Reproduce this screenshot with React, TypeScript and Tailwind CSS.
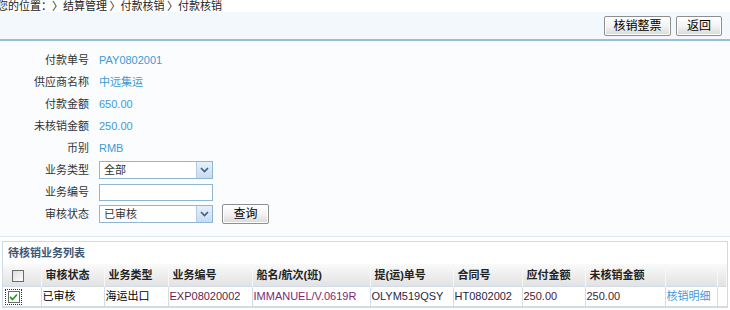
import React from "react";

const FONT = "font-['Liberation_Sans','Noto_Sans_CJK_SC',sans-serif]";

const Chevron = () => (
  <svg width="9" height="6" viewBox="0 0 9 6">
    <path d="M1 1 L4.5 4.5 L8 1" stroke="#3b5f88" strokeWidth="1.6" fill="none" />
  </svg>
);

const Select = ({ value }: { value: string }) => (
  <div className="w-[114px] h-[18px] border border-[#90b6d4] bg-white flex items-center">
    <span className="flex-1 pl-[4px] text-[11px] text-[#333] leading-none">{value}</span>
    <span className="w-[16px] h-[16px] bg-gradient-to-b from-[#e6f0fa] to-[#c6dcf0] border-l border-[#b5cde3] flex items-center justify-center">
      <Chevron />
    </span>
  </div>
);

const Btn = ({ label, w }: { label: string; w: string }) => (
  <button
    className={`${w} h-[20px] border border-[#8e8e8e] rounded-[2px] bg-gradient-to-b from-white via-[#f3f3f3] to-[#d9d9d9] text-[12px] text-black leading-none shadow-[inset_0_0_0_1px_#ffffff]`}
  >
    {label}
  </button>
);

const info = [
  ["付款单号", "PAY0802001"],
  ["供应商名称", "中远集运"],
  ["付款金额", "650.00"],
  ["未核销金额", "250.00"],
  ["币别", "RMB"],
];

const cols = [
  { w: "w-[38px]", h: "" },
  { w: "w-[63px]", h: "审核状态" },
  { w: "w-[64px]", h: "业务类型" },
  { w: "w-[84px]", h: "业务编号" },
  { w: "w-[118px]", h: "船名/航次(班)" },
  { w: "w-[83px]", h: "提(运)单号" },
  { w: "w-[69px]", h: "合同号" },
  { w: "w-[63px]", h: "应付金额" },
  { w: "w-[80px]", h: "未核销金额" },
  { w: "w-[52px]", h: "" },
  { w: "", h: "" },
];

const row = [
  { t: "已审核", c: "text-black" },
  { t: "海运出口", c: "text-black" },
  { t: "EXP08020002", c: "text-[#5c1f4c]" },
  { t: "IMMANUEL/V.0619R", c: "text-[#7d2876]" },
  { t: "OLYM519QSY", c: "text-[#1f2a48]" },
  { t: "HT0802002", c: "text-[#2a2440]" },
  { t: "250.00", c: "text-[#4a1c30]" },
  { t: "250.00", c: "text-[#4a1c30]" },
];

export default function App() {
  return (
    <div className={`w-[730px] h-[310px] bg-white overflow-hidden text-[11px] ${FONT}`}>
      <div className="h-[12px] overflow-hidden">
        <div className="-mt-[1px] -ml-[3px] leading-[12px] text-[#222] whitespace-nowrap font-['Noto_Sans_CJK_SC',sans-serif] [text-spacing-trim:space-all]">
          您的位置：〉结算管理 〉付款核销 〉付款核销
        </div>
      </div>

      <div className="h-[29px] bg-[#f2f8fc] border-b-2 border-[#98bfd8] flex items-center justify-end gap-[5px] pr-[8px]">
        <Btn label="核销整票" w="w-[67px]" />
        <Btn label="返回" w="w-[46px]" />
      </div>

      <div className="bg-[#fafcfe] pt-[8px] pb-[11px] border-b border-[#d8e9f4]">
        {info.map(([k, v]) => (
          <div key={k} className="h-[22px] flex items-center">
            <span className="w-[89px] text-right text-[#333]">{k}</span>
            <span className="ml-[10px] text-[#3d9ad8]">{v}</span>
          </div>
        ))}
        <div className="h-[22px] flex items-center">
          <span className="w-[89px] text-right text-[#333]">业务类型</span>
          <span className="ml-[10px]">
            <Select value="全部" />
          </span>
        </div>
        <div className="h-[22px] flex items-center">
          <span className="w-[89px] text-right text-[#333]">业务编号</span>
          <span className="ml-[10px] w-[114px] h-[17px] border border-[#90b6d4] bg-white" />
        </div>
        <div className="h-[22px] flex items-center">
          <span className="w-[89px] text-right text-[#333]">审核状态</span>
          <span className="ml-[10px]">
            <Select value="已审核" />
          </span>
          <span className="ml-[9px]">
            <Btn label="查询" w="w-[47px]" />
          </span>
        </div>
      </div>

      <div className="mt-[4px] mx-[2px] border border-[#c9dcea] bg-white">
        <div className="h-[22px] flex items-center pl-[5px] font-bold text-[#3e5671]">待核销业务列表</div>
        <table className="w-full table-fixed border-collapse">
          <thead>
            <tr className="h-[22px] bg-gradient-to-b from-[#fafafa] to-[#e2e2e2]">
              {cols.map((c, i) => (
                <th
                  key={i}
                  className={`${c.w} border-r border-[#f7f7f7] text-left font-bold text-[#222] pl-[4px] whitespace-nowrap`}
                >
                  {i === 0 ? (
                    <span className="ml-[5px] inline-block w-[12px] h-[12px] border border-[#6c6c6c] bg-gradient-to-br from-[#dcdcdc] to-white align-middle" />
                  ) : (
                    c.h
                  )}
                </th>
              ))}
            </tr>
          </thead>
          <tbody>
            <tr className="h-[20px]">
              <td className="border border-[#d4dde6] border-l-0">
                <span className="ml-[2px] inline-flex items-center justify-center w-[17px] h-[16px] border border-dotted border-[#333] align-middle">
                  <span className="w-[12px] h-[12px] border border-[#6c6c6c] bg-white flex items-center justify-center">
                    <svg width="9" height="8" viewBox="0 0 9 8">
                      <path d="M1 4 L3.5 6.5 L8 1.5" stroke="#2e9a2e" strokeWidth="1.8" fill="none" />
                    </svg>
                  </span>
                </span>
              </td>
              {row.map((r, i) => (
                <td key={i} className={`border border-[#d4dde6] pl-[1px] whitespace-nowrap overflow-hidden ${r.c}`}>
                  {r.t}
                </td>
              ))}
              <td className="border border-[#d4dde6] pl-[1px] text-[#3d9ad8] whitespace-nowrap">核销明细</td>
              <td className="border border-[#d4dde6] border-r-0" />
            </tr>
          </tbody>
        </table>
      </div>
    </div>
  );
}
